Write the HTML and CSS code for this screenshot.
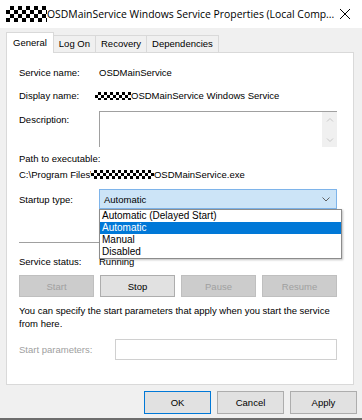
FILE: index.html
```html
<!DOCTYPE html>
<html lang="en">
<head>
    <meta charset="UTF-8">
    <title>OSDMainService Windows Service Properties</title>
    <link rel="stylesheet" href="styles.css">
</head>
<body>
    <div class="titlebar">
        <span class="blot blot-title"></span>
        <span class="title">OSDMainService Windows Service Properties (Local Comp...</span>
        <svg class="close" width="12" height="12" viewBox="0 0 12 12">
            <path d="M1 1 L11 11 M11 1 L1 11" stroke="#000" stroke-width="1"/>
        </svg>
    </div>

    <div class="tabs">
        <div class="tab active">General</div>
        <div class="tab">Log On</div>
        <div class="tab">Recovery</div>
        <div class="tab">Dependencies</div>
    </div>

    <div class="panel">
        <div class="row r-name">
            <span class="label">Service name:</span>
            <span class="value">OSDMainService</span>
        </div>
        <div class="row r-display">
            <span class="label">Display name:</span>
            <span class="value"><span class="blot blot-display"></span>OSDMainService Windows Service</span>
        </div>
        <div class="row r-desc">
            <span class="label">Description:</span>
            <div class="textarea">
                <div class="scroll">
                    <svg width="8" height="6" viewBox="0 0 8 6"><path d="M1 4.5 L4 1.5 L7 4.5" fill="none" stroke="#c8c8c8"/></svg>
                    <svg width="8" height="6" viewBox="0 0 8 6"><path d="M1 1.5 L4 4.5 L7 1.5" fill="none" stroke="#c8c8c8"/></svg>
                </div>
            </div>
        </div>
        <div class="path-label">Path to executable:</div>
        <div class="path-value">C:\Program Files\<span class="blot blot-path"></span>OSDMainService.exe</div>

        <div class="row r-startup">
            <span class="label">Startup type:</span>
            <div class="select">
                <span>Automatic</span>
                <svg width="8" height="5" viewBox="0 0 8 5"><path d="M0.5 0.5 L4 4 L7.5 0.5" fill="none" stroke="#606060"/></svg>
                <ul class="dropdown">
                    <li>Automatic (Delayed Start)</li>
                    <li class="selected">Automatic</li>
                    <li>Manual</li>
                    <li>Disabled</li>
                </ul>
            </div>
        </div>

        <div class="separator"></div>

        <div class="row r-status">
            <span class="label">Service status:</span>
            <span class="value">Running</span>
        </div>

        <div class="actions">
            <button class="btn" disabled>Start</button>
            <button class="btn">Stop</button>
            <button class="btn" disabled>Pause</button>
            <button class="btn" disabled>Resume</button>
        </div>

        <p class="hint">You can specify the start parameters that apply when you start the service from here.</p>

        <div class="row r-params">
            <span class="label muted">Start parameters:</span>
            <div class="input"></div>
        </div>
    </div>

    <div class="footer">
        <button class="btn default">OK</button>
        <button class="btn">Cancel</button>
        <button class="btn">Apply</button>
    </div>
    <div class="taskbar"></div>
</body>
</html>
```

FILE: styles.css
```css
body {
    margin: 0;
    width: 362px;
    height: 420px;
    overflow: hidden;
    background: #f0f0f0;
    font-family: "Liberation Sans", Arial, sans-serif;
    font-size: 9.5px;
    color: #000;
    display: flex;
    flex-direction: column;
}
.blot {
    display: inline-block;
    background: repeating-conic-gradient(#000 0 25%, #fff 0 50%);
    background-size: 8px 8px;
    vertical-align: middle;
}
.titlebar {
    height: 28px;
    background: #fff;
    display: flex;
    align-items: center;
    padding-left: 6px;
    white-space: nowrap;
}
.blot-title {
    width: 41px;
    height: 16px;
    flex: none;
}
.title {
    font-family: "Open Sans", "Noto Sans", sans-serif;
    font-size: 10.4px;
    color: #000;
    overflow: hidden;
}
.close {
    flex: none;
    margin-left: auto;
    margin-right: 11px;
}
.tabs {
    display: flex;
    align-items: flex-end;
    margin-top: 4px;
    padding-left: 6px;
    height: 20px;
}
.tab {
    height: 16px;
    line-height: 16px;
    padding: 0 5px;
    border: 1px solid #d9d9d9;
    border-bottom: none;
    border-left: none;
    background: #f0f0f0;
}
.tab.active {
    height: 20px;
    line-height: 19px;
    background: #fff;
    border-left: 1px solid #d9d9d9;
    padding: 0 6px 0 6px;
    margin-bottom: -1px;
    position: relative;
    z-index: 1;
}
.panel {
    margin: 0 6px 0 6px;
    width: 348px;
    height: 333px;
    background: #fff;
    border: 1px solid #d9d9d9;
    padding: 0 16px 0 12px;
    box-sizing: border-box;
}
.row {
    display: flex;
    align-items: center;
}
.label {
    width: 80px;
    flex: none;
}
.muted {
    color: #a0a0a0;
    width: 96px;
}
.r-name {
    margin-top: 11px;
    height: 16px;
}
.r-display {
    margin-top: 7px;
    height: 16px;
}
.blot-display {
    width: 36px;
    height: 8px;
    margin-left: -4px;
    background-size: 6px 6px;
}
.r-desc {
    margin-top: 8px;
    height: 36px;
    align-items: flex-start;
}
.r-desc .label {
    padding-top: 3px;
}
.textarea {
    flex: 1;
    height: 36px;
    box-sizing: border-box;
    border-top: 1px solid #a0a0a0;
    border-left: 1px solid #a0a0a0;
    display: flex;
    justify-content: flex-end;
}
.scroll {
    width: 15px;
    height: 100%;
    background: #f0f0f0;
    display: flex;
    flex-direction: column;
    justify-content: space-between;
    align-items: center;
    padding: 5px 0 4px;
    box-sizing: border-box;
}
.path-label {
    margin-top: 4px;
    height: 16px;
    line-height: 16px;
}
.path-value {
    height: 15px;
    line-height: 15px;
}
.blot-path {
    width: 63px;
    height: 9px;
    margin: -2px 0 0 -2px;
    background-size: 6px 6px;
}
.r-startup {
    margin-top: 7px;
    height: 20px;
}
.select {
    flex: 1;
    height: 20px;
    box-sizing: border-box;
    background: #cce4f7;
    border: 1px solid #7eb4ea;
    display: flex;
    align-items: center;
    justify-content: space-between;
    padding: 0 6px 0 4px;
    position: relative;
}
.dropdown {
    position: absolute;
    top: 19px;
    left: -1px;
    width: 241px;
    margin: 0;
    padding: 0;
    list-style: none;
    background: #fff;
    border: 1px solid #8c8c8c;
    box-shadow: 1px 1px 2px rgba(0, 0, 0, 0.25);
    z-index: 2;
    font-size: 10px;
}
.dropdown li {
    height: 12px;
    line-height: 12px;
    padding-left: 2px;
}
.dropdown li.selected {
    background: #0078d7;
    color: #fff;
}
.separator {
    margin-top: 33px;
    height: 1px;
    background: #a0a0a0;
}
.r-status {
    margin-top: 10px;
    height: 16px;
}
.actions {
    margin-top: 6px;
    display: flex;
    gap: 6px;
}
.btn {
    font-family: "Liberation Sans", Arial, sans-serif;
    font-size: 9.5px;
    color: #000;
    height: 22px;
    background: #e1e1e1;
    border: 1px solid #adadad;
    padding: 0;
}
.actions .btn {
    flex: 1;
}
.btn:disabled {
    background: #cccccc;
    border-color: #bfbfbf;
    color: #a0a0a0;
}
.hint {
    margin: 7px 0 0;
    line-height: 13px;
}
.r-params {
    margin-top: 9px;
    height: 21px;
}
.input {
    flex: 1;
    height: 21px;
    box-sizing: border-box;
    border: 1px solid #d0d0d0;
}
.footer {
    display: flex;
    justify-content: flex-end;
    gap: 6px;
    padding: 6px 5px 0 0;
}
.footer .btn {
    width: 67px;
    height: 23px;
}
.btn.default {
    border-color: #0078d7;
}
.taskbar {
    margin-top: auto;
    height: 2px;
    background: #6d6d6d;
}
```
